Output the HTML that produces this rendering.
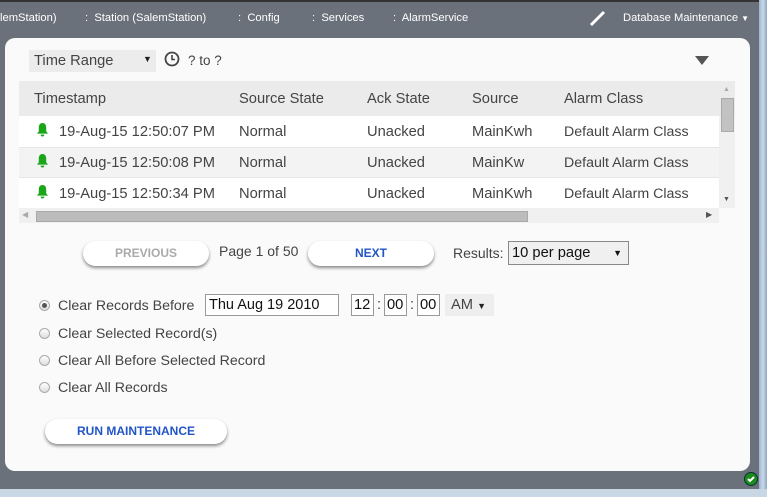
<!DOCTYPE html>
<html><head><meta charset="utf-8"><style>
*{margin:0;padding:0;box-sizing:border-box}
body{width:767px;height:497px;overflow:hidden;background:#6b717b;font-family:"Liberation Sans",sans-serif;position:relative;color:#444}
.a{position:absolute;white-space:nowrap}
.nav{color:#fff;font-size:11.2px;top:12px}
.panel{position:absolute;left:5px;top:38px;width:745px;height:433px;background:#fafafa;border-radius:10px}
.t{font-size:14.7px;color:#444}
.row{position:absolute;left:19px;width:700px}
.btn{position:absolute;background:#fff;border-radius:14px;box-shadow:0 2px 3px rgba(0,0,0,.45);font-size:12px;font-weight:bold;text-align:center}
.rad{position:absolute;width:11px;height:11px;border-radius:50%;border:1px solid #aaa;background:linear-gradient(#fff,#ddd)}
.box{position:absolute;border:1px solid #999;background:#fff;height:22px;font-size:14.7px;color:#111;line-height:20px;padding-left:3px}
</style></head><body>
<div class="a" style="left:0;top:0;width:767px;height:2px;background:#333"></div>
<div class="a nav" style="left:0">lemStation)</div>
<div class="a nav" style="left:85px">:&nbsp; Station (SalemStation)</div>
<div class="a nav" style="left:238px">:&nbsp; Config</div>
<div class="a nav" style="left:312px">:&nbsp; Services</div>
<div class="a nav" style="left:393px">:&nbsp; AlarmService</div>
<svg class="a" style="left:588px;top:9px" width="20" height="18"><path d="M3 16 L16 3" stroke="#fff" stroke-width="3"/></svg>
<div class="a nav" style="left:623px">Database Maintenance <span style="font-size:8px">▼</span></div>
<div class="a" style="left:759px;top:0;width:8px;height:497px;background:linear-gradient(90deg,#9fb4cc,#c8d8ea,#8fa6c0)"></div>
<div class="a" style="left:0;top:489px;width:767px;height:8px;background:#c9d6e4"></div>
<div class="panel"></div>
<div class="a" style="left:29px;top:50px;width:127px;height:22px;background:#ececec"></div>
<div class="a t" style="left:34px;top:53px">Time Range</div>
<div class="a" style="left:143px;top:54px;font-size:9px;color:#222">▼</div>
<svg class="a" style="left:164px;top:51px" width="16" height="16"><circle cx="8" cy="8" r="6.5" fill="none" stroke="#444" stroke-width="1.8"/><path d="M8 4v4.5h3" fill="none" stroke="#444" stroke-width="1.6"/></svg>
<div class="a t" style="left:188px;top:53px;font-size:13.5px">? to ?</div>
<svg class="a" style="left:695px;top:56px" width="14" height="10"><path d="M0 0h14L7 9z" fill="#555"/></svg>
<div class="row" style="top:81px;height:35px;background:#ebebeb;width:716px"></div>
<div class="row" style="top:116px;height:31px;background:#fff"></div>
<div class="row" style="top:147px;height:31px;background:#f3f3f3;border-top:1px solid #e6e6e6;border-bottom:1px solid #e6e6e6"></div>
<div class="row" style="top:178px;height:30px;background:#fff"></div>
<div class="a" style="left:719px;top:116px;width:16px;height:92px;background:#f0f0f0"></div>
<div class="a" style="left:721px;top:98px;width:13px;height:34px;background:#c2c2c2;border:1px solid #aaa"></div>
<div class="a" style="left:723px;top:86px;font-size:7px;color:#aaa">▲</div>
<div class="a" style="left:723px;top:196px;font-size:7px;color:#555">▼</div>
<div class="a" style="left:19px;top:208px;width:700px;height:15px;background:#f0f0f0"></div>
<div class="a" style="left:36px;top:211px;width:492px;height:11px;background:#bcbcbc;border:1px solid #aaa"></div>
<div class="a" style="left:22px;top:210px;font-size:8px;color:#aaa">◀</div>
<div class="a" style="left:706px;top:210px;font-size:8px;color:#555">▶</div>
<div class="a t" style="left:34px;top:91px">Timestamp</div>
<div class="a t" style="left:239px;top:91px">Source State</div>
<div class="a t" style="left:367px;top:91px">Ack State</div>
<div class="a t" style="left:472px;top:91px">Source</div>
<div class="a t" style="left:564px;top:91px">Alarm Class</div>
<svg width="0" height="0" style="position:absolute"><defs><symbol id="b" viewBox="0 0 14 16"><path d="M7 1c-3 0-4 2.5-4 5v4l-2 2.5h12L11 10V6c0-2.5-1-5-4-5z M5 13.5h4a2 2 0 0 1-4 0z" fill="#1aa51a"/></symbol></defs></svg>
<svg class="a" style="left:36px;top:122px" width="13" height="15"><use href="#b"/></svg>
<svg class="a" style="left:36px;top:153px" width="13" height="15"><use href="#b"/></svg>
<svg class="a" style="left:36px;top:184px" width="13" height="15"><use href="#b"/></svg>
<div class="a t" style="left:59px;top:124px">19-Aug-15 12:50:07 PM</div>
<div class="a t" style="left:59px;top:155px">19-Aug-15 12:50:08 PM</div>
<div class="a t" style="left:59px;top:186px">19-Aug-15 12:50:34 PM</div>
<div class="a t" style="left:239px;top:124px">Normal</div>
<div class="a t" style="left:239px;top:155px">Normal</div>
<div class="a t" style="left:239px;top:186px">Normal</div>
<div class="a t" style="left:367px;top:124px">Unacked</div>
<div class="a t" style="left:367px;top:155px">Unacked</div>
<div class="a t" style="left:367px;top:186px">Unacked</div>
<div class="a t" style="left:472px;top:124px">MainKwh</div>
<div class="a t" style="left:472px;top:155px">MainKw</div>
<div class="a t" style="left:472px;top:186px">MainKwh</div>
<div class="a t" style="left:564px;top:124px;font-size:14.2px">Default Alarm Class</div>
<div class="a t" style="left:564px;top:155px;font-size:14.2px">Default Alarm Class</div>
<div class="a t" style="left:564px;top:186px;font-size:14.2px">Default Alarm Class</div>
<div class="btn" style="left:83px;top:241px;width:126px;height:25px;line-height:25px;color:#aaa">PREVIOUS</div>
<div class="a t" style="left:219px;top:243px;font-size:14px">Page 1 of 50</div>
<div class="btn" style="left:308px;top:241px;width:126px;height:25px;line-height:25px;color:#2256c6">NEXT</div>
<div class="a t" style="left:453px;top:245px;font-size:14px">Results:</div>
<div class="box" style="left:508px;top:241px;width:121px;height:24px;line-height:22px;background:#f0f0f0;border-color:#888">10 per page<span style="position:absolute;right:6px;font-size:9px">▼</span></div>
<div class="rad" style="left:39px;top:300px"><div style="width:5px;height:5px;border-radius:50%;background:#555;margin:2px"></div></div>
<div class="rad" style="left:39px;top:328px"></div>
<div class="rad" style="left:39px;top:355px"></div>
<div class="rad" style="left:39px;top:382px"></div>
<div class="a t" style="left:58px;top:298px;font-size:14.2px">Clear Records Before</div>
<div class="a t" style="left:58px;top:326px;font-size:14.2px">Clear Selected Record(s)</div>
<div class="a t" style="left:58px;top:353px;font-size:14.2px">Clear All Before Selected Record</div>
<div class="a t" style="left:58px;top:380px;font-size:14.2px">Clear All Records</div>
<div class="box" style="left:205px;top:294px;width:134px;font-size:14.5px">Thu Aug 19 2010</div>
<div class="box" style="left:351px;top:294px;width:23px;padding-left:2px">12</div>
<div class="a t" style="left:377px;top:297px">:</div>
<div class="box" style="left:384px;top:294px;width:23px;padding-left:2px">00</div>
<div class="a t" style="left:410px;top:297px">:</div>
<div class="box" style="left:417px;top:294px;width:23px;padding-left:2px">00</div>
<div class="a" style="left:445px;top:294px;width:49px;height:22px;background:#eee"></div>
<div class="a t" style="left:451px;top:297px">AM <span style="font-size:9px;color:#222">▼</span></div>
<div class="btn" style="left:45px;top:419px;width:182px;height:25px;line-height:25px;color:#2256c6">RUN MAINTENANCE</div>
<div class="a" style="left:744px;top:472px;width:14px;height:14px;border-radius:50%;background:#1c8a1c;border:1px solid #033"><svg width="12" height="12" style="position:absolute;left:0;top:0"><path d="M3 6l2 2 4-4" stroke="#fff" stroke-width="2" fill="none"/></svg></div>
</body></html>
